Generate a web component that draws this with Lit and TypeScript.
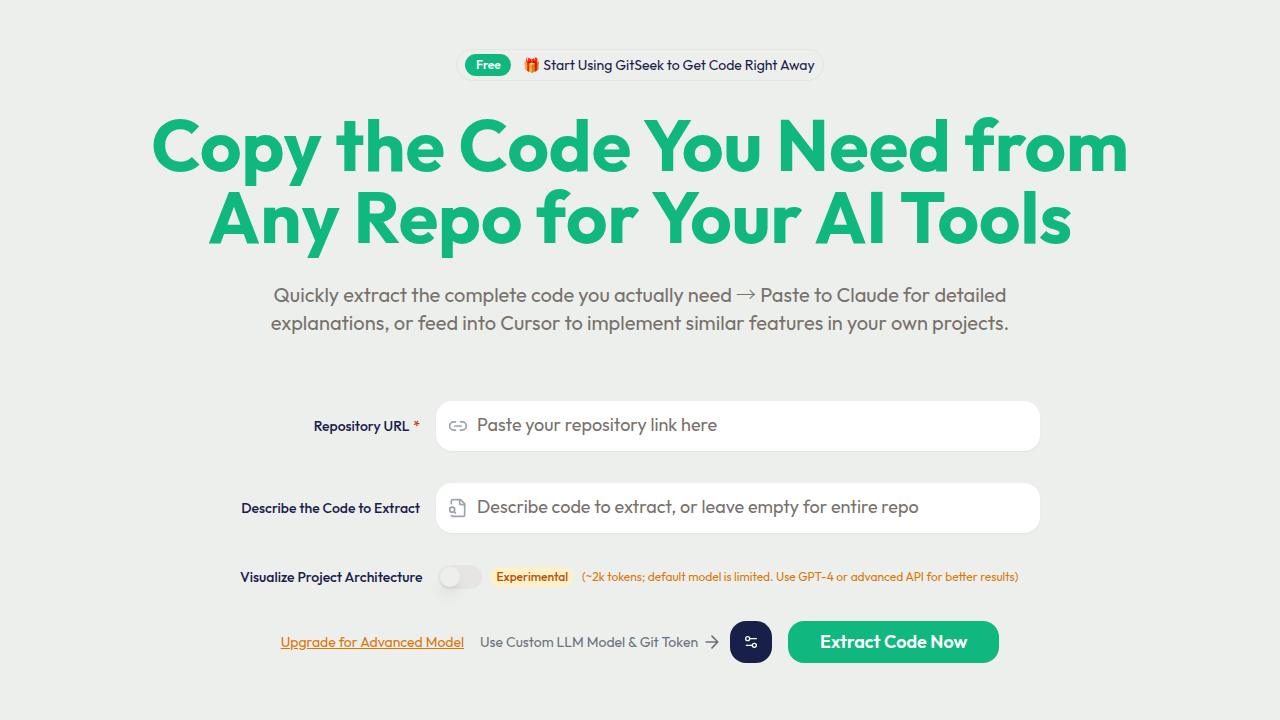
import { LitElement, html, css } from "lit";
import { customElement, state } from "lit/decorators.js";

@customElement("app-root")
export class AppRoot extends LitElement {
  @state() private visualize = false;

  static styles = css`
    :host {
      display: block;
      min-height: 100vh;
      box-sizing: border-box;
      padding: 49px 24px;
      background: #edefec;
      color: #18204a;
      font-family: "Outfit", "Lato", sans-serif;
      font-size: 14px;
      line-height: 20px;
    }
    * { box-sizing: border-box; }
    svg {
      display: block;
      flex: none;
      fill: none;
      stroke: currentColor;
      stroke-width: 2;
      stroke-linecap: round;
      stroke-linejoin: round;
    }
    .hero {
      display: flex;
      flex-direction: column;
      align-items: center;
      text-align: center;
    }
    .announce {
      display: flex;
      align-items: center;
      gap: 12px;
      height: 32px;
      padding: 0 8px;
      border: 1px solid #e5e5e3;
      border-radius: 16px;
      color: inherit;
      text-decoration: none;
    }
    .tag {
      min-width: 46px;
      padding: 1px 10px;
      border-radius: 11px;
      background: #10b77f;
      color: #fff;
      font-size: 12px;
      font-weight: 600;
    }
    h1 {
      margin: 28px 0;
      color: #10b77f;
      font-size: 72px;
      font-weight: 700;
      line-height: 72px;
    }
    .lead {
      margin: 0;
      color: #78716c;
      font-size: 20px;
      line-height: 28px;
    }
    .arrow { font-family: "Noto Sans CJK JP", sans-serif; font-weight: 300; line-height: 1; }
    form {
      display: flex;
      flex-direction: column;
      gap: 32px;
      max-width: 800px;
      margin: 64px auto 0;
    }
    .row {
      display: grid;
      grid-template-columns: 180px 1fr;
      align-items: center;
      gap: 16px;
    }
    .label {
      font-weight: 500;
      text-align: right;
      white-space: nowrap;
    }
    .required { margin-left: 1px; color: #c2410c; }
    .field {
      display: flex;
      align-items: center;
      gap: 9px;
      height: 50px;
      padding: 0 12px;
      border-radius: 16px;
      background: #fff;
      box-shadow: 0 1px 2px rgb(0 0 0 / 0.05);
      color: #9ca3af;
    }
    .field input {
      flex: 1;
      min-width: 0;
      height: 100%;
      padding: 0 0 4px;
      border: 0;
      outline: 0;
      background: none;
      color: #18204a;
      font: inherit;
      font-size: 18px;
    }
    .field input::placeholder { color: #78716c; opacity: 1; }
    .options {
      display: flex;
      align-items: center;
      gap: 8px;
      white-space: nowrap;
    }
    .options .label { margin-right: 8px; }
    .switch {
      appearance: none;
      flex: none;
      width: 44px;
      height: 24px;
      margin: 0;
      padding: 2px;
      border-radius: 12px;
      background: #e7e5e4;
      cursor: pointer;
    }
    .switch::before {
      content: "";
      display: block;
      width: 20px;
      height: 20px;
      border-radius: 50%;
      background: #edefec;
      box-shadow: 0 10px 15px -3px rgb(0 0 0 / 0.1), 0 4px 6px -4px rgb(0 0 0 / 0.1);
    }
    .switch:checked { background: #10b77f; }
    .switch:checked::before { margin-left: 20px; }
    .badge {
      padding: 0 6px;
      border-radius: 10px;
      background: #fef0c7;
      color: #b45309;
      font-size: 12px;
      font-weight: 500;
    }
    .note { color: #d97706; font-size: 12px; }
    .actions {
      display: flex;
      align-items: center;
      justify-content: center;
      gap: 16px;
      white-space: nowrap;
    }
    .upgrade { color: #d97706; }
    .custom {
      display: flex;
      align-items: center;
      gap: 8px;
      color: #6b7280;
    }
    .hint {
      display: flex;
      align-items: center;
      gap: 4px;
    }
    button {
      display: flex;
      align-items: center;
      justify-content: center;
      height: 42px;
      border: 0;
      border-radius: 16px;
      color: #fff;
      font: inherit;
      cursor: pointer;
    }
    .settings { width: 42px; padding: 0; background: #18204a; }
    .submit {
      padding: 0 32px;
      background: #10b77f;
      font-size: 18px;
      font-weight: 600;
    }
  `;

  render() {
    return html`
      <main>
        <section class="hero">
          <a class="announce" href="#extract">
            <span class="tag">Free</span>
            <span>🎁 Start Using GitSeek to Get Code Right Away</span>
          </a>
          <h1>Copy the Code You Need from<br />Any Repo for Your AI Tools</h1>
          <p class="lead">
            Quickly extract the complete code you actually need <span class="arrow">→</span> Paste to Claude for detailed<br />
            explanations, or feed into Cursor to implement similar features in your own projects.
          </p>
        </section>
        <form id="extract" @submit=${(e: Event) => e.preventDefault()}>
          <div class="row">
            <label class="label" for="repo">Repository URL <span class="required">*</span></label>
            <div class="field">
              <svg width="20" height="20" viewBox="0 0 24 24" aria-hidden="true">
                <path d="M9 17H7A5 5 0 0 1 7 7h2M15 7h2a5 5 0 1 1 0 10h-2M8 12h8" />
              </svg>
              <input id="repo" type="url" placeholder="Paste your repository link here" />
            </div>
          </div>
          <div class="row">
            <label class="label" for="describe">Describe the Code to Extract</label>
            <div class="field">
              <svg width="20" height="20" viewBox="0 0 24 24" aria-hidden="true">
                <path d="M14 2v4a2 2 0 0 0 2 2h4" />
                <path d="M4.268 21a2 2 0 0 0 1.727 1H18a2 2 0 0 0 2-2V7l-5-5H6a2 2 0 0 0-2 2v3" />
                <path d="m9 18-1.5-1.5" />
                <circle cx="5" cy="14" r="3" />
              </svg>
              <input id="describe" type="text" placeholder="Describe code to extract, or leave empty for entire repo" />
            </div>
          </div>
          <div class="options">
            <label class="label" for="visualize">Visualize Project Architecture</label>
            <input
              class="switch"
              id="visualize"
              type="checkbox"
              role="switch"
              .checked=${this.visualize}
              @change=${(e: Event) => (this.visualize = (e.target as HTMLInputElement).checked)}
            />
            <span class="badge">Experimental</span>
            <span class="note">(~2k tokens; default model is limited. Use GPT-4 or advanced API for better results)</span>
          </div>
          <div class="actions">
            <a class="upgrade" href="#upgrade">Upgrade for Advanced Model</a>
            <div class="custom">
              <span class="hint">
                Use Custom LLM Model &amp; Git Token
                <svg width="20" height="20" viewBox="0 0 24 24" aria-hidden="true">
                  <path d="M5 12h14M12 5l7 7-7 7" />
                </svg>
              </span>
              <button class="settings" type="button" aria-label="Model settings">
                <svg width="16" height="16" viewBox="0 0 24 24" aria-hidden="true">
                  <path d="M20 7h-9M14 17H5" />
                  <circle cx="17" cy="17" r="3" />
                  <circle cx="7" cy="7" r="3" />
                </svg>
              </button>
            </div>
            <button class="submit" type="submit">Extract Code Now</button>
          </div>
        </form>
      </main>
    `;
  }
}
